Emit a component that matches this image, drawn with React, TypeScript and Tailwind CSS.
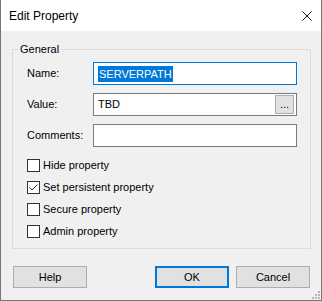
import React from "react";

function Checkbox({ label, checked = false }: { label: string; checked?: boolean }) {
	return (
		<div className="flex items-center h-[13px]">
			<div className="w-[13px] h-[13px] border border-[#333333] bg-white flex items-center justify-center">
				{checked && (
					<svg width="11" height="11" viewBox="0 0 11 11">
						<polyline points="1.5,5.5 4,8 9.5,2.5" fill="none" stroke="#333333" strokeWidth="1" />
					</svg>
				)}
			</div>
			<span className="ml-[3px] leading-[13px]">{label}</span>
		</div>
	);
}

function Field({ label, children, className = "" }: { label: string; children: React.ReactNode; className?: string }) {
	return (
		<div className={`flex items-center h-[23px] ${className}`}>
			<span className="w-[66px]">{label}</span>
			{children}
		</div>
	);
}

export default function App() {
	return (
		<div className="relative w-[322px] h-[301px] flex flex-col border-x border-b border-[#777777] bg-[#f0f0f0] text-black text-[11px] font-['Liberation_Sans',Arial,sans-serif]">
			<div className="h-[31px] shrink-0 bg-white flex items-center justify-between pl-2 pr-[9px]">
				<span className="text-[12px]">Edit Property</span>
				<svg width="10" height="10" viewBox="0 0 10 10">
					<path d="M0.5 0.5 L9.5 9.5 M9.5 0.5 L0.5 9.5" stroke="#111111" strokeWidth="1" />
				</svg>
			</div>

			<fieldset className="mt-[11px] ml-[11px] mr-[10px] border border-[#dcdcdc] pl-[14px] pr-[13px] pb-[10px]">
				<legend className="-ml-[9px] px-[2px] leading-[14px]">General</legend>

				<Field label="Name:" className="mt-[6px]">
					<div className="w-[204px] h-[23px] border border-[#0078d7] bg-white flex items-center pl-[4px]">
						<span className="bg-[#0078d7] text-white leading-[16px] px-[1px]">SERVERPATH</span>
					</div>
				</Field>

				<Field label="Value:" className="mt-[8px]">
					<div className="w-[204px] h-[23px] border border-[#7a7a7a] bg-white flex items-center pl-[4px] pr-[2px]">
						<span className="flex-1">TBD</span>
						<div className="w-[19px] h-[19px] border border-[#adadad] bg-[#e1e1e1] flex items-end justify-center pb-[3px] leading-none text-[11px]">
							...
						</div>
					</div>
				</Field>

				<Field label="Comments:" className="mt-[8px]">
					<div className="w-[204px] h-[23px] border border-[#7a7a7a] bg-white" />
				</Field>

				<div className="mt-[12px] flex flex-col gap-[9px]">
					<Checkbox label="Hide property" />
					<Checkbox label="Set persistent property" checked />
					<Checkbox label="Secure property" />
					<Checkbox label="Admin property" />
				</div>
			</fieldset>

			<div className="mt-[17px] flex items-center pl-[12px] pr-[11px]">
				<button type="button" className="w-[74px] h-[22px] border border-[#adadad] bg-[#e1e1e1]">
					Help
				</button>
				<button type="button" className="ml-auto w-[74px] h-[22px] border-2 border-[#0078d7] bg-[#e1e1e1]">
					OK
				</button>
				<button type="button" className="ml-[7px] w-[74px] h-[22px] border border-[#adadad] bg-[#e1e1e1]">
					Cancel
				</button>
			</div>

			<svg className="absolute right-[1px] bottom-[1px]" width="8" height="8" viewBox="0 0 8 8">
				<rect x="6" y="0" width="2" height="2" fill="#b8b8b8" />
				<rect x="3" y="3" width="2" height="2" fill="#b8b8b8" />
				<rect x="6" y="3" width="2" height="2" fill="#b8b8b8" />
				<rect x="0" y="6" width="2" height="2" fill="#b8b8b8" />
				<rect x="3" y="6" width="2" height="2" fill="#b8b8b8" />
				<rect x="6" y="6" width="2" height="2" fill="#b8b8b8" />
			</svg>
		</div>
	);
}
